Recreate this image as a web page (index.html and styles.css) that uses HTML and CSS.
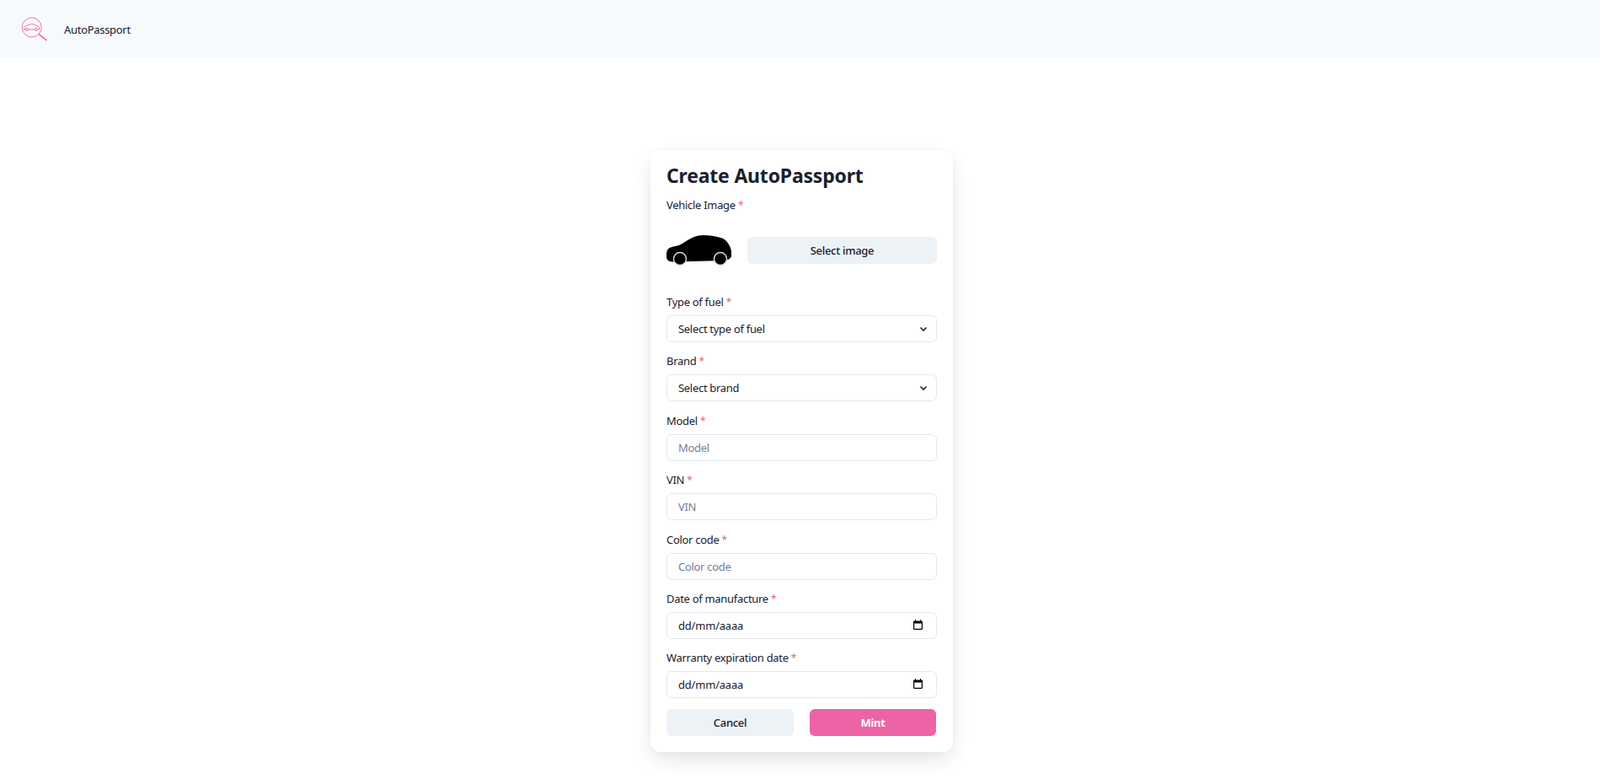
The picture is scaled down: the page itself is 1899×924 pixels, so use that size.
FILE: index.html
```html
<!DOCTYPE html>
<html lang="en">
<head>
  <meta charset="UTF-8">
  <title>AutoPassport</title>
  <meta name="viewport" content="width=device-width, initial-scale=1.0">
  <link rel="stylesheet" href="styles.css">
</head>
<body>

  <header class="topbar">
    <svg class="logo" width="34" height="32" viewBox="0 0 34 32" fill="none" stroke="#f272ab" stroke-width="1">
      <circle cx="13.700" cy="13.500" r="11.500"/>
      <path d="M22 21.500l9.500 7.500" stroke-width="1.600"/>
      <path d="M6.500 16H4.700v-2.500c0-1 1-1.500 3-2 2-1.300 4-1.800 6-1.800s4 .6 5.800 2c2 .4 3.200.8 3.200 1.800V16h-1.500"/>
      <path d="M9.500 16h8"/>
      <circle cx="8" cy="16" r="1.500"/>
      <circle cx="19" cy="16" r="1.500"/>
    </svg>
    <span class="brand">AutoPassport</span>
  </header>

  <main class="page">
    <form class="card">
      <h1 class="title">Create AutoPassport</h1>

      <label class="label">Vehicle Image <span class="req">*</span></label>
      <div class="image-row">
        <svg class="car" width="77" height="36" viewBox="0 0 77 36">
          <path fill="#000" d="M0 24C0 19 1 17 3 15.500 6 13.500 12 13 16 11.500 20 9.500 24 6 29 3.700 33 1.500 38 .2 44 0c8 0 16 1.500 23 3.700 4 2.300 7 6.300 8.700 10.600C77 18 77.500 21 77 25c-1 3-4 4.500-8 5l-59 1.500c-5 0-8-.5-9-2.500-1-2-1-3-1-5z"/>
          <circle cx="16" cy="28" r="7.500" fill="#000" stroke="#ddd" stroke-width="1.400"/>
          <circle cx="64" cy="28" r="7.500" fill="#000" stroke="#ddd" stroke-width="1.400"/>
        </svg>
        <button type="button" class="btn btn-grey select-image">Select image</button>
      </div>

      <div class="field first">
        <label class="label">Type of fuel <span class="req">*</span></label>
        <div class="control">
          <select class="input"><option>Select type of fuel</option></select>
          <svg class="chevron" width="12" height="12" viewBox="0 0 12 12" fill="none" stroke="#1a202c" stroke-width="1.600"><path d="M2.500 4.500L6 8l3.500-3.500"/></svg>
        </div>
      </div>

      <div class="field">
        <label class="label">Brand <span class="req">*</span></label>
        <div class="control">
          <select class="input"><option>Select brand</option></select>
          <svg class="chevron" width="12" height="12" viewBox="0 0 12 12" fill="none" stroke="#1a202c" stroke-width="1.600"><path d="M2.500 4.500L6 8l3.500-3.500"/></svg>
        </div>
      </div>

      <div class="field">
        <label class="label">Model <span class="req">*</span></label>
        <input class="input" type="text" placeholder="Model">
      </div>

      <div class="field">
        <label class="label">VIN <span class="req">*</span></label>
        <input class="input" type="text" placeholder="VIN">
      </div>

      <div class="field">
        <label class="label">Color code <span class="req">*</span></label>
        <input class="input" type="text" placeholder="Color code">
      </div>

      <div class="field">
        <label class="label">Date of manufacture <span class="req">*</span></label>
        <div class="control">
          <input class="input date" type="text" value="dd/mm/aaaa">
          <svg class="calendar" width="11" height="12" viewBox="0 0 11 12"><path fill="#000" d="M2 0h1v1.500h5V0h1v1.500h.8c.7 0 1.200.5 1.200 1.200v8.100c0 .7-.5 1.200-1.200 1.200H1.200C.5 12 0 11.500 0 10.800V2.700c0-.7.5-1.200 1.200-1.200H2z"/><path fill="#fff" d="M1.200 4.500h8.600v6.200c0 .1 0 .1-.1.100H1.300c-.1 0-.1 0-.1-.1z"/></svg>
        </div>
      </div>

      <div class="field">
        <label class="label">Warranty expiration date <span class="req">*</span></label>
        <div class="control">
          <input class="input date" type="text" value="dd/mm/aaaa">
          <svg class="calendar" width="11" height="12" viewBox="0 0 11 12"><path fill="#000" d="M2 0h1v1.500h5V0h1v1.500h.8c.7 0 1.200.5 1.200 1.200v8.100c0 .7-.5 1.200-1.200 1.200H1.200C.5 12 0 11.500 0 10.800V2.700c0-.7.5-1.200 1.200-1.200H2z"/><path fill="#fff" d="M1.200 4.500h8.600v6.200c0 .1 0 .1-.1.100H1.300c-.1 0-.1 0-.1-.1z"/></svg>
        </div>
      </div>

      <div class="actions">
        <button type="button" class="btn btn-grey">Cancel</button>
        <button type="button" class="btn btn-pink">Mint</button>
      </div>
    </form>
  </main>

</body>
</html>
```

FILE: styles.css
```css
* {
  box-sizing: border-box;
}

body {
  font-family: "Noto Sans", "Open Sans", sans-serif;
  font-size: 13px;
  letter-spacing: -0.3px;
  color: #1a202c;
  background-color: #fff;
  margin: 0;
}

.topbar {
  display: flex;
  align-items: center;
  height: 69px;
  padding-left: 24px;
  background-color: #f7fafc;
}

.logo {
  margin-right: 18px;
}

.page {
  display: flex;
  justify-content: center;
  padding: 109px 0 32px 4px;
}

.card {
  width: 359px;
  height: 714px;
  padding: 16px 19px 19px;
  background-color: #fff;
  border-radius: 12px;
  box-shadow: 0 10px 25px -3px rgba(0,0,0,0.12), 0 0 6px rgba(0,0,0,0.03);
}

.title {
  font-size: 23px;
  font-weight: 700;
  letter-spacing: -0.2px;
  line-height: 29px;
  margin: 0 0 9px;
}

.label {
  display: block;
  line-height: 22px;
  height: 22px;
  margin-bottom: 5px;
}

.req {
  color: #e9686c;
  font-size: 12px;
}

.image-row {
  display: flex;
  align-items: center;
  gap: 19px;
  height: 56px;
  margin: 15px 0 22px;
}

.car {
  flex: none;
}

.select-image {
  flex: 1;
}

.btn {
  height: 32px;
  border: 0;
  border-radius: 6px;
  font-family: inherit;
  font-size: 13px;
  font-weight: 500;
  letter-spacing: -0.3px;
  color: #1a202c;
}

.btn-grey {
  background-color: #edf2f7;
}

.btn-pink {
  background-color: #ed64a6;
  color: #fff;
  font-weight: 700;
}

.field {
  margin-top: 11.400px;
}

.field.first {
  margin-top: 0;
}

.control {
  position: relative;
}

.input {
  display: block;
  width: 100%;
  height: 32px;
  padding: 0 13px;
  border: 1px solid #e2e8f0;
  border-radius: 6px;
  background-color: #fff;
  font-family: inherit;
  font-size: 13px;
  letter-spacing: -0.3px;
  color: #1a202c;
  appearance: none;
}

.input::placeholder {
  color: #718096;
}

.input.date {
  letter-spacing: -0.2px;
}

.chevron {
  position: absolute;
  top: 10px;
  right: 10px;
  pointer-events: none;
}

.calendar {
  position: absolute;
  top: 9px;
  right: 17px;
  pointer-events: none;
}

.actions {
  display: grid;
  grid-template-columns: 151px 150px;
  gap: 19px;
  margin-top: 12.600px;
}
```
